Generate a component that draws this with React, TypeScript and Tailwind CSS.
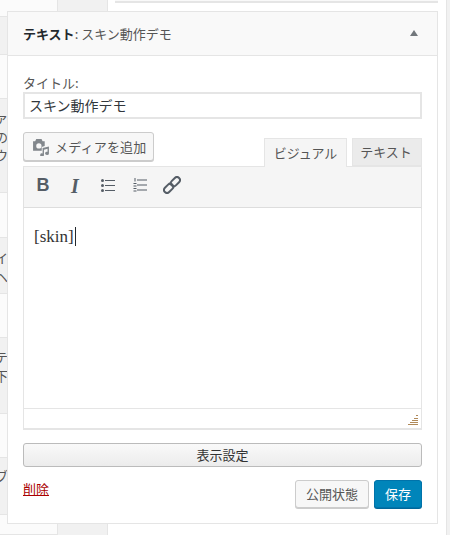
import { type ReactNode } from 'react'

const jp = "font-['Noto_Sans_CJK_JP','Noto_Sans',sans-serif]"

const bands: { h: number; gray?: boolean; lines?: [number, string][] }[] = [
  { h: 17 },
  { h: 38, gray: true },
  { h: 44 },
  { h: 94, gray: true, lines: [[11, 'ァ'], [30, 'の'], [48, 'ウ']] },
  { h: 45 },
  { h: 56, gray: true, lines: [[12, 'イ'], [31, 'ヘ']] },
  { h: 44 },
  { h: 76, gray: true, lines: [[11, 'テ'], [30, '下']] },
  { h: 44 },
  { h: 57, gray: true, lines: [[10, 'ブ']] },
  { h: 20 },
]

function Band({ h, gray, lines }: (typeof bands)[number]) {
  return (
    <div
      className={`relative overflow-hidden border-b border-[#e5e5e5] ${gray ? 'bg-[#f1f1f1]' : 'bg-[#fbfbfb]'}`}
      style={{ height: h }}
    >
      {lines?.map(([top, ch]) => (
        <span
          key={ch}
          className="absolute left-[-5px] text-[13px] leading-4 text-[#555]"
          style={{ top }}
        >
          {ch}
        </span>
      ))}
    </div>
  )
}

function MediaIcon() {
  return (
    <svg width="18" height="18" viewBox="0 0 17 17" fill="#82878c">
      <path d="M1 3h2l1-2h5l1 2h2v4.500L9.200 8.500V12H1V3zm5.500 2a2.500 2.500 0 1 0 0 5 2.500 2.500 0 0 0 0-5z" />
      <path d="M10 9.500l6-1.500v6.500a1.800 1.500 0 1 1-1.300-1.400V10.200L11.300 11v5a1.800 1.500 0 1 1-1.300-1.400z" />
    </svg>
  )
}

function BulletIcon() {
  return (
    <svg width="14" height="13" viewBox="0 0 14 13" fill="#555d66">
      <rect x="0" y="0" width="3" height="3" rx="1.500" />
      <rect x="0" y="5" width="3" height="3" rx="1.500" />
      <rect x="0" y="10" width="3" height="3" rx="1.500" />
      <rect x="4" y="1" width="10" height="1" />
      <rect x="4" y="6" width="10" height="1" />
      <rect x="4" y="11" width="10" height="1" />
    </svg>
  )
}

function NumberIcon() {
  return (
    <svg width="14" height="14" viewBox="0 0 14 14" fill="#555d66">
      <rect x="1.500" y="0" width="1" height="3.500" />
      <rect x="0.500" y="5" width="3" height="1" />
      <rect x="0.500" y="7.500" width="3" height="1" />
      <rect x="0.500" y="10" width="3" height="1" />
      <rect x="0.500" y="12.500" width="3" height="1" />
      <rect x="4" y="1.500" width="10" height="1" />
      <rect x="4" y="6.500" width="10" height="1" />
      <rect x="4" y="11.500" width="10" height="1" />
    </svg>
  )
}

function LinkIcon() {
  return (
    <svg width="18" height="18" viewBox="0 0 18 18" fill="none" stroke="#555d66" strokeWidth="2">
      <g transform="rotate(-45 9 9)">
        <rect x="-1" y="6" width="10.500" height="6" rx="3" />
        <rect x="8.500" y="6" width="10.500" height="6" rx="3" />
      </g>
    </svg>
  )
}

function Tool({ children }: { children: ReactNode }) {
  return <div className="flex h-[18px] w-[32px] items-center justify-center">{children}</div>
}

export default function App() {
  return (
    <div className={`relative flex h-[535px] w-[450px] overflow-hidden bg-white ${jp}`}>
      <div className="w-[57px] shrink-0">
        {bands.map((b, i) => (
          <Band key={i} {...b} />
        ))}
      </div>
      <div className="w-[51px] shrink-0 border-x border-[#e5e5e5] bg-[#f1f1f1]" />
      <div className="flex-1 pl-[7px]">
        <div className="h-[3px] w-[323px] border-b-2 border-[#e5e5e5] bg-[#f9f9f9]" />
      </div>
      <div className="w-[4px] shrink-0 border-l border-[#e5e5e5] bg-[#f1f1f1]" />

      <div className="absolute left-[7px] top-[11px] flex h-[513px] w-[431px] flex-col border border-[#e5e5e5] bg-white">
        <div className="flex h-[44px] shrink-0 items-center justify-between border-b border-[#e5e5e5] bg-[#f9f9f9] pl-[15px] pr-[19px]">
          <h3 className="text-[13px] leading-5 text-[#555]">
            <strong className="font-bold text-[#23282d]">テキスト</strong>: スキン動作デモ
          </h3>
          <div className="-mt-[2px] h-0 w-0 border-x-[4px] border-b-[6px] border-x-transparent border-b-[#72777c]" />
        </div>

        <div className="flex flex-1 flex-col px-[15px]">
          <label className="mt-[18px] block h-[18px] text-[13px] leading-[18px] text-[#555]">タイトル:</label>
          <div className="flex h-[27px] items-center border-2 border-[#e5e5e5] pl-[4px] text-[14px] text-[#32373c]">
            スキン動作デモ
          </div>

          <div className="mt-[13px] flex h-[34px] items-start justify-between">
            <button className="flex h-[29px] w-[131px] items-center gap-[5px] rounded-[3px] border border-[#ccc] bg-[#f7f7f7] pl-[8px] text-[13px] tracking-[0.2px] text-[#555] shadow-[0_1px_0_#ccc]">
              <MediaIcon />
              メディアを追加
            </button>
            <div className="mt-[6px] flex items-start gap-[5px]">
              <div className="z-10 flex h-[29px] w-[83px] items-center justify-center border border-b-0 border-[#e5e5e5] bg-[#f5f5f5] text-[13px] text-[#555]">
                ビジュアル
              </div>
              <div className="flex h-[28px] w-[70px] items-center justify-center border border-[#e5e5e5] bg-[#ebebeb] pr-[2px] text-[13px] text-[#555]">
                テキスト
              </div>
            </div>
          </div>

          <div className="flex h-[264px] flex-col border border-b-2 border-[#e5e5e5]">
            <div className="flex h-[41px] shrink-0 items-center border-b border-[#ddd] bg-[#f5f5f5] pb-[4px] pl-[4px] shadow-[0_1px_1px_rgba(0,0,0,0.1)]">
              <Tool>
                <span className="-ml-[2px] mt-[1px] font-['Liberation_Sans',sans-serif] text-[18px] font-bold text-[#555d66]">B</span>
              </Tool>
              <Tool>
                <span className="-ml-[2px] mt-[1px] font-['Liberation_Serif',serif] text-[20px] font-bold italic text-[#555d66]">I</span>
              </Tool>
              <Tool>
                <BulletIcon />
              </Tool>
              <Tool>
                <NumberIcon />
              </Tool>
              <Tool>
                <LinkIcon />
              </Tool>
            </div>
            <div className="h-[200px] shrink-0 bg-white pl-[10px] pt-[15px]">
              <span className="border-r border-[#23282d] pr-px font-['Liberation_Serif',serif] text-[17px] leading-6 text-[#333]">
                [skin]
              </span>
            </div>
            <div className="relative flex-1 border-t border-[#e5e5e5] bg-white">
              <svg className="absolute bottom-[2px] right-[2px]" width="11" height="11" viewBox="0 0 11 11" fill="#b08a5a">
                <rect x="8" y="0" width="2" height="1" />
                <rect x="6" y="3" width="4" height="1" />
                <rect x="4" y="5" width="6" height="1" />
                <rect x="2" y="7" width="8" height="1" />
                <rect x="0" y="9" width="10" height="1" />
              </svg>
            </div>
          </div>

          <button className="mt-[13px] h-[24px] w-full shrink-0 rounded-[3px] border border-[#bbb] bg-gradient-to-b from-[#f9f9f9] to-[#ececec] pb-[2px] text-[13px] leading-none text-[#333]">
            表示設定
          </button>

          <div className="mt-[12px] flex items-start justify-between">
            <a className="mt-[1px] text-[13px] leading-[18px] text-[#a00] underline">削除</a>
            <div className="mt-[1px] flex gap-[5px]">
              <button className="h-[28px] w-[74px] rounded-[3px] border border-[#ccc] bg-[#f7f7f7] text-[13px] text-[#555] shadow-[0_1px_0_#ccc]">
                公開状態
              </button>
              <button className="h-[28px] w-[48px] rounded-[3px] border border-[#0073aa] bg-[#0085ba] text-[13px] text-white shadow-[0_1px_0_#006799]">
                保存
              </button>
            </div>
          </div>
        </div>
      </div>
    </div>
  )
}
